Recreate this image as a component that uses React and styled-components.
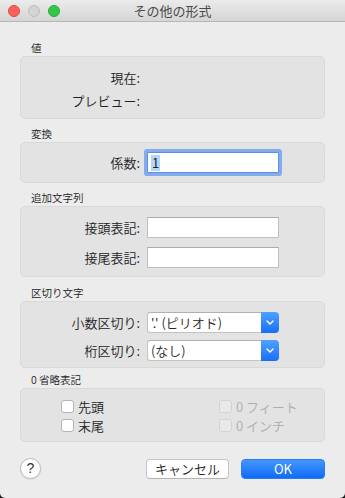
import styled, { createGlobalStyle } from "styled-components";

const GlobalStyle = createGlobalStyle`
  html, body {
    margin: 0;
    padding: 0;
    background: #1c1c1c;
  }
  body {
    font-family: "Noto Sans CJK JP", "Noto Sans", sans-serif;
    font-weight: 350;
  }
`;

const Window = styled.div`
  width: 345px;
  height: 498px;
  background: #ececec;
  border-radius: 0 0 5px 5px;
  overflow: hidden;
  display: flex;
  flex-direction: column;
  color: #262626;
`;

const TitleBar = styled.div`
  height: 21px;
  flex: none;
  display: grid;
  grid-template-columns: 1fr auto 1fr;
  align-items: center;
  background: linear-gradient(#ebebeb, #d5d5d5);
  border-bottom: 1px solid #b7b7b7;
`;

const Lights = styled.div`
  display: flex;
  gap: 8px;
  padding-left: 8px;
`;

const Light = styled.span`
  width: 12px;
  height: 12px;
  box-sizing: border-box;
  border-radius: 50%;
  background: ${(p) => p.$color};
  border: 1px solid ${(p) => p.$edge};
`;

const Title = styled.div`
  font-size: 13px;
  line-height: 21px;
  color: #4a4a4a;
  font-weight: 400;
`;

const Content = styled.div`
  padding: 19px 20px 0;
  display: flex;
  flex-direction: column;
`;

const SectionLabel = styled.div`
  margin-top: ${(p) => p.$top || 0}px;
  margin-bottom: 1px;
  padding-left: 11px;
  font-size: 10.5px;
  line-height: 14px;
  color: #222;
`;

const Box = styled.div`
  background: #e3e3e3;
  border: 1px solid #d9d9d9;
  border-radius: 5px;
  padding: ${(p) => p.$pad};
  display: flex;
  flex-direction: column;
  gap: ${(p) => p.$gap || 0}px;
`;

const Row = styled.div`
  display: grid;
  grid-template-columns: 119px 132px;
  column-gap: 7px;
  align-items: center;
  height: 21px;
`;

const Label = styled.div`
  text-align: right;
  font-size: 13px;
  line-height: 21px;
  color: #222;
`;

const TextField = styled.div`
  height: 21px;
  box-sizing: border-box;
  background: #fff;
  border: 1px solid #bfbfbf;
  border-top-color: #ababab;
  font-size: 13px;
  line-height: 19px;
  padding: 0 3px;
  display: flex;
  align-items: center;
  ${(p) =>
    p.$focused &&
    `
    border-color: #5f91e2;
    box-shadow: 0 0 0 3px #82aced;
    border-radius: 1px;
  `}
`;

const Selected = styled.span`
  background: #b3d6fd;
  line-height: 16px;
  padding: 0 1px;
  font-weight: 400;
`;

const Select = styled.div`
  height: 21px;
  display: flex;
  box-sizing: border-box;
`;

const SelectValue = styled.div`
  flex: 1;
  background: #fff;
  border: 1px solid #c3c3c3;
  border-right: none;
  border-top-color: #b0b0b0;
  border-radius: 3px 0 0 3px;
  font-size: 13px;
  line-height: 19px;
  padding: 0 3px;
  white-space: nowrap;
`;

const SelectArrow = styled.div`
  width: 18px;
  flex: none;
  background: linear-gradient(#4fa1ff, #176ff6);
  border-radius: 0 4px 4px 0;
  display: flex;
  align-items: center;
  justify-content: center;
`;

const CheckGrid = styled.div`
  display: grid;
  grid-template-columns: 158px auto;
  padding-left: 40px;
`;

const CheckItem = styled.div`
  display: flex;
  align-items: center;
  gap: 4px;
  height: 19px;
  font-size: 13px;
  color: ${(p) => (p.$disabled ? "#adadad" : "#222")};
`;

const CheckBox = styled.span`
  width: 13px;
  height: 13px;
  box-sizing: border-box;
  border-radius: 3px;
  background: ${(p) => (p.$disabled ? "#e9e9e9" : "#fff")};
  border: 1px solid ${(p) => (p.$disabled ? "#d2d2d2" : "#b3b3b3")};
`;

const Footer = styled.div`
  margin-top: 16px;
  padding: 0 20px;
  display: flex;
  align-items: center;
`;

const Help = styled.div`
  width: 21px;
  height: 21px;
  box-sizing: border-box;
  border-radius: 50%;
  background: #fff;
  border: 1px solid #bdbdbd;
  box-shadow: 0 0.5px 1px rgba(0, 0, 0, 0.15);
  font-family: "Liberation Sans", sans-serif;
  font-size: 14px;
  font-weight: 400;
  line-height: 19px;
  text-align: center;
  color: #333;
`;

const Buttons = styled.div`
  margin-left: auto;
  display: flex;
  gap: 12px;
`;

const Button = styled.div`
  width: ${(p) => p.$w}px;
  height: 20px;
  box-sizing: border-box;
  border-radius: 4px;
  font-size: 13px;
  line-height: 18px;
  text-align: center;
  ${(p) =>
    p.$primary
      ? `
    background: linear-gradient(#4596fe, #0f6cf6);
    border: 1px solid #2a7cf0;
    color: #fff;
    font-weight: 400;
  `
      : `
    background: #fff;
    border: 1px solid #c6c6c6;
    border-bottom-color: #b3b3b3;
    color: #222;
  `}
`;

const Chevron = () => (
  <svg width="8" height="5" viewBox="0 0 8 5">
    <path d="M1 1l3 3 3-3" fill="none" stroke="#fff" strokeWidth="1.4" strokeLinecap="round" strokeLinejoin="round" />
  </svg>
);

export default function App() {
  return (
    <>
      <GlobalStyle />
      <Window>
        <TitleBar>
          <Lights>
            <Light $color="#fc605b" $edge="#de4a44" />
            <Light $color="#d4d4d4" $edge="#bdbdbd" />
            <Light $color="#34c84a" $edge="#27a93a" />
          </Lights>
          <Title>その他の形式</Title>
          <div />
        </TitleBar>
        <Content>
          <SectionLabel>値</SectionLabel>
          <Box $pad="10px 0 7px" $gap={2}>
            <Row>
              <Label>現在:</Label>
            </Row>
            <Row>
              <Label>プレビュー:</Label>
            </Row>
          </Box>

          <SectionLabel $top={8}>変換</SectionLabel>
          <Box $pad="9px 0 9px">
            <Row>
              <Label>係数:</Label>
              <TextField $focused>
                <Selected>1</Selected>
              </TextField>
            </Row>
          </Box>

          <SectionLabel $top={8}>追加文字列</SectionLabel>
          <Box $pad="10px 0 8px" $gap={9}>
            <Row>
              <Label>接頭表記:</Label>
              <TextField />
            </Row>
            <Row>
              <Label>接尾表記:</Label>
              <TextField />
            </Row>
          </Box>

          <SectionLabel $top={9}>区切り文字</SectionLabel>
          <Box $pad="10px 0 6px" $gap={7}>
            <Row>
              <Label>小数区切り:</Label>
              <Select>
                <SelectValue>'.' (ピリオド)</SelectValue>
                <SelectArrow>
                  <Chevron />
                </SelectArrow>
              </Select>
            </Row>
            <Row>
              <Label>桁区切り:</Label>
              <Select>
                <SelectValue>(なし)</SelectValue>
                <SelectArrow>
                  <Chevron />
                </SelectArrow>
              </Select>
            </Row>
          </Box>

          <SectionLabel $top={5}>0 省略表記</SectionLabel>
          <Box $pad="8px 0 6px">
            <CheckGrid>
              <CheckItem>
                <CheckBox />
                先頭
              </CheckItem>
              <CheckItem $disabled>
                <CheckBox $disabled />
                0 フィート
              </CheckItem>
              <CheckItem>
                <CheckBox />
                末尾
              </CheckItem>
              <CheckItem $disabled>
                <CheckBox $disabled />
                0 インチ
              </CheckItem>
            </CheckGrid>
          </Box>
        </Content>
        <Footer>
          <Help>?</Help>
          <Buttons>
            <Button $w={83}>キャンセル</Button>
            <Button $w={84} $primary>
              OK
            </Button>
          </Buttons>
        </Footer>
      </Window>
    </>
  );
}
